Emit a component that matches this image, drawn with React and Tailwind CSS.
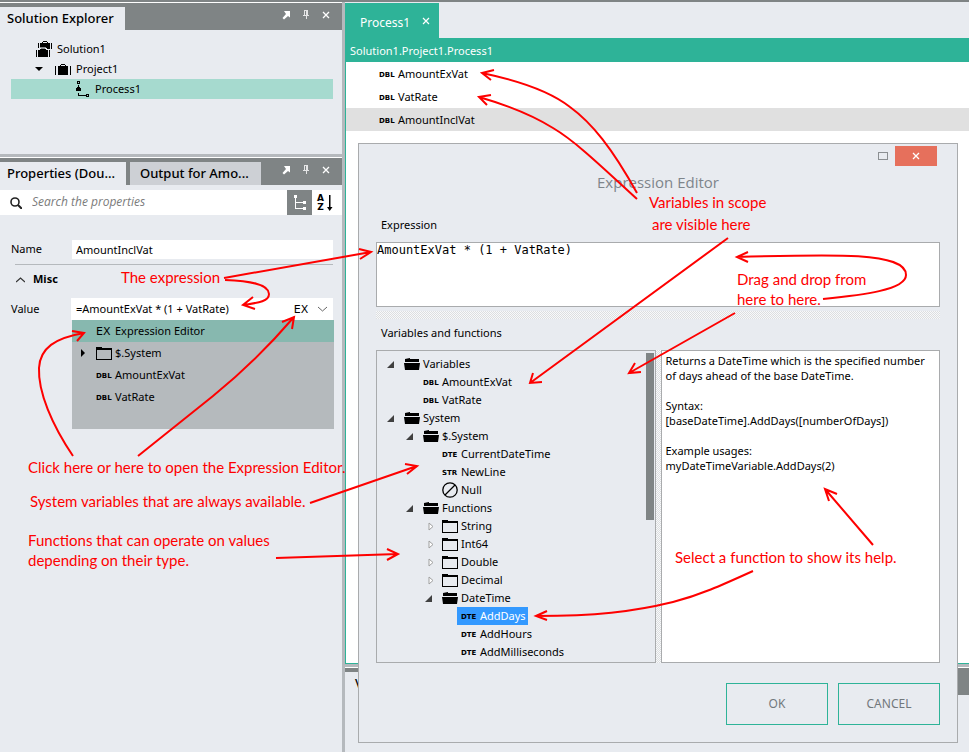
import React from "react";

function TypeTag({ children }) {
  return (
    <span className="mt-[2px] w-4 shrink-0 font-['DejaVu_Sans',sans-serif] text-[7px] font-bold leading-none text-black">
      {children}
    </span>
  );
}

function ExTag() {
  return (
    <span className="w-4 shrink-0 font-['DejaVu_Sans',sans-serif] text-[11px] leading-none text-black">
      EX
    </span>
  );
}

function FolderClosed() {
  return (
    <svg className="h-[13px] w-4 shrink-0" viewBox="0 0 16 13" shapeRendering="crispEdges" aria-hidden="true">
      <path d="M0 0h6v1h10v12H0z M1 3v9h14V3z" fill="#000" fillRule="evenodd" />
    </svg>
  );
}

function FolderOpen() {
  return (
    <svg className="h-3 w-4 shrink-0" viewBox="0 0 16 12" aria-hidden="true">
      <path d="M1 1L6 0v1h9v3H1z M0 5h16l-1 7H1z" fill="#000" />
    </svg>
  );
}

function NullIcon() {
  return (
    <svg className="h-4 w-4 shrink-0" viewBox="0 0 16 16" fill="none" stroke="#000" strokeWidth="1.3" aria-hidden="true">
      <circle cx="8" cy="8" r="7.2" />
      <path d="M3 13L13 3" />
    </svg>
  );
}

function CaseIcon() {
  return (
    <svg className="h-[11px] w-4 shrink-0" viewBox="0 0 16 11" shapeRendering="crispEdges" aria-hidden="true">
      <path d="M0 2h1v9H0z M15 2h1v9h-1z M3 2h2V1h1V0h4v1h1v1h2v9H3z M6 1v1h4V1z" fill="#000" fillRule="evenodd" />
    </svg>
  );
}

function SolutionIcon() {
  return (
    <svg className="h-4 w-4 shrink-0" viewBox="0 0 16 16" shapeRendering="crispEdges" aria-hidden="true">
      <path d="M2 2h1v5H2z M15 2h1v6h-1z M4 2h2V1h1V0h4v1h1v1h2v6h-3V7H4z M7 1v1h4V1z" fill="#000" fillRule="evenodd" />
      <path d="M5 7h4v1H5z M4 6h6v1H4z" fill="#8a8d90" />
      <path d="M0 9h1v7H0z M13 9h1v7h-1z M2 9h2V8h6v1h2v7H2z" fill="#000" />
    </svg>
  );
}

function ProcessIcon() {
  return (
    <svg className="h-4 w-4 shrink-0" viewBox="0 0 16 16" shapeRendering="crispEdges" aria-hidden="true">
      <path d="M1 0h3v3H1z M2 1v1h1V1z M2 4h1v2h1v1h1v3H0V7h1V6h1z M2 12h1v2h7v-1h3v3h-3v-1H2z M11 14v1h1v-1z" fill="#000" fillRule="evenodd" />
    </svg>
  );
}

function HeaderTools() {
  return (
    <div className="ml-auto flex gap-[10px] pr-[11px] pt-[7px]">
      <button type="button" aria-label="Float" className="h-[10px] w-[10px]">
        <svg viewBox="0 0 10 10" className="h-[10px] w-[10px]">
          <path d="M3 1h6v6.500L7 6 3 9.500 1.500 8 5 4z" fill="#fff" />
        </svg>
      </button>
      <button type="button" aria-label="Pin" className="h-[10px] w-[10px]">
        <svg viewBox="0 0 10 10" className="h-[10px] w-[10px]" shapeRendering="crispEdges">
          <path d="M3 0h4v5h1v1H6v3H5V6H2V5h1z M4 1v4h1V1z" fill="#e4e5e6" fillRule="evenodd" />
        </svg>
      </button>
      <button type="button" aria-label="Close" className="h-[10px] w-[10px]">
        <svg viewBox="0 0 10 10" className="h-[10px] w-[10px]">
          <path d="M2 2l6 6M8 2L2 8" stroke="#fff" strokeWidth="1.3" />
        </svg>
      </button>
    </div>
  );
}

function SolutionExplorer() {
  return (
    <section className="h-[151px] shrink-0">
      <header className="flex h-[27px] bg-[#7f8485]">
        <h2 className="mt-1 w-[125px] whitespace-nowrap bg-[#e8ebf0] pl-[7px] text-[13px] font-medium leading-[22px]">Solution Explorer</h2>
        <HeaderTools />
      </header>
      <ul className="pt-[9px]">
        <li className="flex h-5 items-center gap-[5px] pl-9">
          <SolutionIcon />
          Solution1
        </li>
        <li className="flex h-5 items-center gap-[5px] pl-[35px]">
          <svg className="mr-[7px] h-1 w-2" viewBox="0 0 8 4" aria-hidden="true">
            <path d="M0 0h8L4 4z" fill="#000" />
          </svg>
          <CaseIcon />
          Project1
        </li>
        <li className="ml-[11px] mr-[9px] flex h-5 items-center gap-[3px] bg-[#a6dacf] pl-[65px]">
          <ProcessIcon />
          Process1
        </li>
      </ul>
    </section>
  );
}

function ValueMenu() {
  return (
    <ul className="absolute left-px top-[22px] h-[109px] w-full bg-[#b5babd]">
      <li className="flex h-[22px] items-center gap-[3px] bg-[#87b8af] pl-6">
        <ExTag />
        Expression Editor
      </li>
      <li className="flex h-[22px] items-center gap-[3px] pl-[9px]">
        <svg className="mr-2 h-2 w-1" viewBox="0 0 4 8" aria-hidden="true">
          <path d="M0 0l4 4-4 4z" fill="#000" />
        </svg>
        <FolderClosed />
        $.System
      </li>
      <li className="flex h-[22px] items-center gap-[3px] pl-6">
        <TypeTag>DBL</TypeTag>
        AmountExVat
      </li>
      <li className="flex h-[22px] items-center gap-[3px] pl-6">
        <TypeTag>DBL</TypeTag>
        VatRate
      </li>
    </ul>
  );
}

function Properties() {
  return (
    <section className="flex-1">
      <header className="flex h-[27px] bg-[#7f8485] text-[13px] font-medium leading-[22px]">
        <h2 className="mt-1 w-[126px] whitespace-nowrap bg-[#e8ebf0] pl-[7px]">Properties (Dou...</h2>
        <h2 className="ml-1 mt-1 w-[131px] whitespace-nowrap bg-[#cdd0d5] pl-[10px]">Output for Amo...</h2>
        <HeaderTools />
      </header>
      <div className="mt-[5px] flex h-[25px] items-center bg-white">
        <svg className="ml-[10px] h-3 w-3" viewBox="0 0 12 12" fill="none" stroke="#222" aria-hidden="true">
          <circle cx="5" cy="5" r="4" strokeWidth="1.6" />
          <path d="M8 8l4 4" strokeWidth="2" />
        </svg>
        <input
          aria-label="Search the properties"
          placeholder="Search the properties"
          className="ml-[10px] h-[22px] min-w-0 flex-1 self-start bg-transparent font-['Open_Sans',sans-serif] text-[12px] italic outline-none placeholder:text-[#7b7b7b]"
        />
        <button type="button" aria-label="Categorized" className="flex h-[25px] w-[25px] items-center justify-center bg-[#7f8485]">
          <svg className="h-4 w-3" viewBox="0 0 12 16" shapeRendering="crispEdges" aria-hidden="true">
            <path d="M0 0h3v3H2v4h7V6h3v3H9V8H2v5h7v-1h3v3H9v-1H1V3H0z" fill="#fff" />
          </svg>
        </button>
        <button type="button" aria-label="Alphabetical" className="flex h-[25px] w-[30px] items-center pl-[5px]">
          <span className="flex flex-col font-['DejaVu_Sans',sans-serif] text-[9px] font-bold leading-[9px]">
            <span>A</span>
            <span>Z</span>
          </span>
          <svg className="ml-[2px] h-4 w-[7px]" viewBox="0 0 7 16" aria-hidden="true">
            <path d="M3 0h1.500v12h2L3.700 16 1 12h2z" fill="#000" />
          </svg>
        </button>
      </div>
      <div className="ml-[11px] mr-[9px] mt-[25px] flex h-[19px] items-center">
        <label htmlFor="prop-name" className="w-[61px]">Name</label>
        <input id="prop-name" defaultValue="AmountInclVat" className="h-[19px] min-w-0 flex-1 bg-white px-1 outline-none" />
      </div>
      <hr className="ml-[15px] mr-[9px] mt-[5px] border-[#b5b9bd]" />
      <h3 className="flex h-[33px] items-center gap-2 pb-1 pl-4 font-bold">
        <svg className="h-[6px] w-[9px]" viewBox="0 0 9 6" fill="none" stroke="#333" strokeWidth="1.3" aria-hidden="true">
          <path d="M0 5l4.500-4L9 5" />
        </svg>
        Misc
      </h3>
      <div className="relative ml-[11px] mr-[9px] flex h-[22px] items-center">
        <label htmlFor="prop-value" className="w-[60px]">Value</label>
        <div className="relative flex h-[22px] min-w-0 flex-1 items-center bg-white">
          <input id="prop-value" defaultValue="=AmountExVat * (1 + VatRate)" className="min-w-0 flex-1 pl-[5px] outline-none" />
          <button type="button" aria-label="Expression editor" className="mr-[9px] flex"><ExTag /></button>
          <button type="button" aria-label="Open list" className="mr-[6px]">
            <svg className="h-[6px] w-[9px]" viewBox="0 0 9 6" fill="none" stroke="#666" aria-hidden="true">
              <path d="M0 1l4.500 4L9 1" />
            </svg>
          </button>
          <ValueMenu />
        </div>
      </div>
    </section>
  );
}

const indents = ["pl-[10px]", "pl-[29px]", "pl-[48px]", "pl-[67px]"];

const tree = [
  [0, "open", "Variables"],
  [1, "DBL", "AmountExVat"],
  [1, "DBL", "VatRate"],
  [0, "open", "System"],
  [1, "open", "$.System"],
  [2, "DTE", "CurrentDateTime"],
  [2, "STR", "NewLine"],
  [2, "null", "Null"],
  [1, "open", "Functions"],
  [2, "closed", "String"],
  [2, "closed", "Int64"],
  [2, "closed", "Double"],
  [2, "closed", "Decimal"],
  [2, "open", "DateTime"],
  [3, "DTE", "AddDays"],
  [3, "DTE", "AddHours"],
  [3, "DTE", "AddMilliseconds"],
];

function TreeRow({ level, kind, label }) {
  const leaf = kind !== "open" && kind !== "closed";
  const selected = label === "AddDays";
  return (
    <li className={"flex h-[18px] items-center " + indents[level]}>
      <span className={leaf ? "w-[13px] shrink-0" : "w-[17px] shrink-0"}>
        {kind === "open" && (
          <svg className="h-[7px] w-[7px]" viewBox="0 0 7 7" aria-hidden="true">
            <path d="M7 0v7H0z" fill="#404040" />
          </svg>
        )}
        {kind === "closed" && (
          <svg className="ml-[3px] h-[9px] w-[6px]" viewBox="0 0 6 9" aria-hidden="true">
            <path d="M1 1l4 3.500L1 8z" fill="#fff" stroke="#a0a0a0" />
          </svg>
        )}
      </span>
      <span
        className={
          "flex h-[18px] items-center gap-[3px] " +
          (leaf ? "pl-1 " : "") +
          (selected ? "bg-[#3399ff] pr-[2px] text-white" : "")
        }
      >
        {kind === "open" && <FolderOpen />}
        {kind === "closed" && <FolderClosed />}
        {kind === "null" && <NullIcon />}
        {leaf && kind !== "null" && <TypeTag>{kind}</TypeTag>}
        {label}
      </span>
    </li>
  );
}

function ExpressionDialog() {
  return (
    <div
      role="dialog"
      aria-label="Expression Editor"
      className="absolute bottom-[9px] left-[358px] right-[11px] top-[143px] flex flex-col border border-[#a9abad] bg-[#e8ebf0] px-[17px] pt-[2px] pb-[17px]"
    >
      <div className="flex h-5 items-center justify-end gap-[7px] pr-[3px]">
        <button type="button" aria-label="Maximize" className="h-2 w-[10px] border border-[#8b8f92]" />
        <button type="button" aria-label="Close window" className="flex h-5 w-[42px] items-center justify-center bg-[#e6705c]">
          <svg className="h-2 w-2" viewBox="0 0 8 8" aria-hidden="true">
            <path d="M1 1l6 6M7 1L1 7" stroke="#fff" strokeWidth="1.300" />
          </svg>
        </button>
      </div>
      <h1 className="mt-[6px] text-center font-['Open_Sans',sans-serif] text-[15px] leading-5 text-[#7e858b]">Expression Editor</h1>
      <label htmlFor="expression" className="mt-[25px] h-4 pl-[5px] leading-4">Expression</label>
      <textarea
        id="expression"
        defaultValue="AmountExVat * (1 + VatRate)"
        className="mt-[9px] h-[65px] shrink-0 resize-none border border-[#a9abad] bg-white font-['DejaVu_Sans_Mono',monospace] text-[12px] leading-[15px] outline-none"
      />
      <div className="mt-1 h-2 shrink-0 bg-[repeating-conic-gradient(#dcdee0_0_25%,#f8f9fa_0_50%)] bg-[length:2px_2px]" />
      <h2 className="mt-[6px] h-4 pl-[5px] leading-4">Variables and functions</h2>
      <div className="mt-[9px] grid min-h-0 flex-1 grid-cols-[minmax(0,1fr)_5px_minmax(0,1fr)]">
        <div className="flex overflow-hidden border border-[#a9abad] pr-px">
          <ul className="flex-1 pt-1">
            {tree.map(([level, kind, label]) => (
              <TreeRow key={level + label} level={level} kind={kind} label={label} />
            ))}
          </ul>
          <div className="mt-[2px] h-[167px] w-2 bg-[#7f8485]" />
        </div>
        <div className="bg-[repeating-conic-gradient(#dcdee0_0_25%,#f8f9fa_0_50%)] bg-[length:2px_2px]" />
        <div className="border border-[#a9abad] bg-white px-1 pt-[2px] leading-[15px]">
          <p>Returns a DateTime which is the specified number<br />of days ahead of the base DateTime.</p>
          <p className="mt-[15px]">Syntax:<br />[baseDateTime].AddDays([numberOfDays])</p>
          <p className="mt-[15px]">Example usages:<br />myDateTimeVariable.AddDays(2)</p>
        </div>
      </div>
      <div className="mt-5 flex shrink-0 justify-end gap-[10px] text-[12px] text-[#72787c]">
        <button type="button" className="h-[42px] w-[102px] border border-[#2eb398]">OK</button>
        <button type="button" className="h-[42px] w-[102px] border border-[#2eb398]">CANCEL</button>
      </div>
    </div>
  );
}

function Editor() {
  return (
    <main className="flex min-w-0 flex-1 flex-col">
      <div className="flex h-[35px] shrink-0 bg-[#e8ebf0]">
        <div className="flex w-[94px] items-center gap-3 bg-[#2eb398] pl-[15px] pt-1 text-[12px] text-white">
          Process1
          <button type="button" aria-label="Close tab">
            <svg className="mb-[3px] h-2 w-2" viewBox="0 0 8 8" aria-hidden="true">
              <path d="M1 1l6 6M7 1L1 7" stroke="#fff" strokeWidth="1.200" />
            </svg>
          </button>
        </div>
      </div>
      <div className="h-6 shrink-0 bg-[#2eb398] pl-[5px] leading-[26px] text-white">Solution1.Project1.Process1</div>
      <ul className="flex-1 border-b border-l border-[#2eb398] bg-white">
        <li className="flex h-[23px] items-center gap-[3px] pl-[33px] pt-px"><TypeTag>DBL</TypeTag>AmountExVat</li>
        <li className="flex h-[23px] items-center gap-[3px] pl-[33px] pt-px"><TypeTag>DBL</TypeTag>VatRate</li>
        <li className="flex h-[23px] items-center gap-[3px] bg-[#e0e0e0] pl-[33px] pt-px"><TypeTag>DBL</TypeTag>AmountInclVat</li>
      </ul>
      <div className="h-[3px] shrink-0 bg-[#b5b9bd]" />
      <div className="flex h-7 shrink-0 border-t border-white bg-[#7f8485]">
        <h2 className="mt-1 w-[100px] bg-[#e8ebf0] pl-[10px] text-[13px] font-medium leading-[22px]">Variables</h2>
      </div>
      <div className="h-[57px] shrink-0 bg-[#e8ebf0]" />
    </main>
  );
}

const arrows = [
  "M482 73C530 83 556 96 570 107C592 123 612 148 637 193M494 70L482 73L491 80",
  "M479 97C510 106 532 115 553 128C575 141 600 165 637 199M491 95L479 97L487 105",
  "M224 278L371 252M359 249L371 252L360 259",
  "M225 280C250 281 269 284 269 294C269 302 256 303 243 305M253 297L243 305L255 309",
  "M73 456C52 425 38 392 39 368C40 348 55 338 84 333M72 331L84 333L77 341",
  "M138 456L213 396C245 370 270 345 294 317M282 322L294 317L292 329",
  "M310 503L417 466M405 464L417 466L407 474",
  "M276 558L398 554M387 549L398 554L387 560",
  "M728 238L530 383M533 373L530 383L542 382",
  "M735 313L629 373M635 363L629 373L641 372",
  "M823 299C862 295 906 290 906 275C906 252 835 254 737 257M748 252L737 257L748 262",
  "M873 545L825 489M837 494L825 489L829 501",
  "M753 571C720 586 700 595 673 602C632 612 595 616 536 616M547 611L536 616L547 620",
];

function Note({ className, children }) {
  return (
    <p className={"absolute whitespace-nowrap font-['Lato',sans-serif] text-[15px] leading-5 text-[#fe0000] " + className}>
      {children}
    </p>
  );
}

function Annotations() {
  return (
    <div className="pointer-events-none absolute left-0 top-0 h-full w-full">
      <svg className="absolute left-0 top-0 h-[752px] w-[969px]" viewBox="0 0 969 752" fill="none" stroke="#fe0000" strokeWidth="2" aria-hidden="true">
        {arrows.map((d) => (
          <path key={d} d={d} />
        ))}
      </svg>
      <Note className="left-[121px] top-[267px]">The expression</Note>
      <Note className="left-[649px] top-[192px]">Variables in scope</Note>
      <Note className="left-[652px] top-[214px]">are visible here</Note>
      <Note className="left-[737px] top-[269px]">Drag and drop from<br />here to here.</Note>
      <Note className="left-[28px] top-[457px]">Click here or here to open the Expression Editor.</Note>
      <Note className="left-[30px] top-[491px]">System variables that are always available.</Note>
      <Note className="left-[28px] top-[530px]">Functions that can operate on values<br />depending on their type.</Note>
      <Note className="left-[675px] top-[547px]">Select a function to show its help.</Note>
    </div>
  );
}

export default function App() {
  return (
    <div className="relative flex min-h-screen flex-col overflow-hidden bg-[#e8ebf0] font-['Noto_Sans',sans-serif] text-[11px] text-black">
      <div className="h-[2px] shrink-0 bg-[#7f8485]" />
      <div className="flex flex-1">
        <aside className="flex w-[342px] shrink-0 flex-col border-t border-white">
          <SolutionExplorer />
          <div className="h-[3px] shrink-0 bg-[#b5b9bd]" />
          <div className="h-px shrink-0 bg-white" />
          <Properties />
        </aside>
        <div className="w-[3px] shrink-0 bg-[#b5b9bd]" />
        <div className="flex min-w-0 flex-1 flex-col pt-px">
          <Editor />
        </div>
      </div>
      <ExpressionDialog />
      <Annotations />
    </div>
  );
}
